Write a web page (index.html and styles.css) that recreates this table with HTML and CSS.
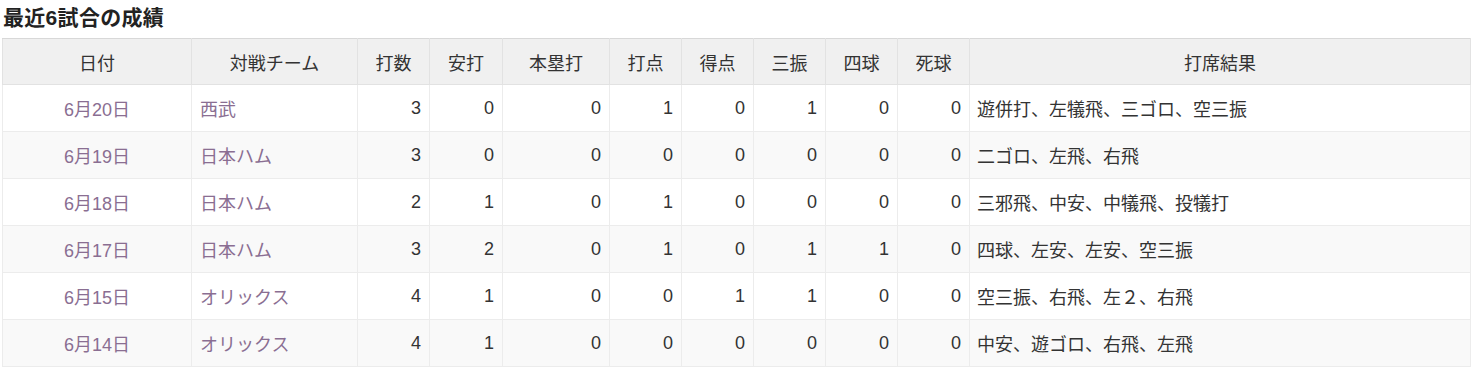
FILE: index.html
```html
<!DOCTYPE html>
<html lang="ja">
<head>
<meta charset="utf-8">
<link rel="stylesheet" href="styles.css">
</head>
<body>
<h2 class="title">最近6試合の成績</h2>
<table class="stats">
  <colgroup>
    <col class="c-date"><col class="c-team"><col class="c-n72"><col class="c-n73"><col class="c-n107">
    <col class="c-n72"><col class="c-n72"><col class="c-n72"><col class="c-n72"><col class="c-n72"><col class="c-res">
  </colgroup>
  <thead>
    <tr><th>日付</th><th>対戦チーム</th><th>打数</th><th>安打</th><th>本塁打</th><th>打点</th><th>得点</th><th>三振</th><th>四球</th><th>死球</th><th>打席結果</th></tr>
  </thead>
  <tbody>
    <tr><td class="date"><a>6月20日</a></td><td class="team"><a>西武</a></td><td>3</td><td>0</td><td>0</td><td>1</td><td>0</td><td>1</td><td>0</td><td>0</td><td class="res">遊併打、左犠飛、三ゴロ、空三振</td></tr>
    <tr><td class="date"><a>6月19日</a></td><td class="team"><a>日本ハム</a></td><td>3</td><td>0</td><td>0</td><td>0</td><td>0</td><td>0</td><td>0</td><td>0</td><td class="res">二ゴロ、左飛、右飛</td></tr>
    <tr><td class="date"><a>6月18日</a></td><td class="team"><a>日本ハム</a></td><td>2</td><td>1</td><td>0</td><td>1</td><td>0</td><td>0</td><td>0</td><td>0</td><td class="res">三邪飛、中安、中犠飛、投犠打</td></tr>
    <tr><td class="date"><a>6月17日</a></td><td class="team"><a>日本ハム</a></td><td>3</td><td>2</td><td>0</td><td>1</td><td>0</td><td>1</td><td>1</td><td>0</td><td class="res">四球、左安、左安、空三振</td></tr>
    <tr><td class="date"><a>6月15日</a></td><td class="team"><a>オリックス</a></td><td>4</td><td>1</td><td>0</td><td>0</td><td>1</td><td>1</td><td>0</td><td>0</td><td class="res">空三振、右飛、左２、右飛</td></tr>
    <tr><td class="date"><a>6月14日</a></td><td class="team"><a>オリックス</a></td><td>4</td><td>1</td><td>0</td><td>0</td><td>0</td><td>0</td><td>0</td><td>0</td><td class="res">中安、遊ゴロ、右飛、左飛</td></tr>
  </tbody>
</table>
</body>
</html>
```
FILE: styles.css
```css
html, body {
  margin: 0;
  padding: 0;
  background: #fff;
}
body {
  font-family: "Liberation Sans", "Noto Sans CJK JP", sans-serif;
  color: #333;
}
.title {
  margin: 0;
  padding: 5px 0 0 3px;
  height: 38px;
  box-sizing: border-box;
  font-size: 21px;
  line-height: 26px;
  font-weight: bold;
  color: #222;
  letter-spacing: 0.3px;
}
.stats {
  margin-left: 2px;
  border-collapse: collapse;
  table-layout: fixed;
  width: 1469px;
  font-size: 18px;
  border: 1px solid #d8d8d8;
}
.c-date { width: 189px; }
.c-team { width: 166px; }
.c-n72 { width: 72px; }
.c-n73 { width: 73px; }
.c-n107 { width: 107px; }
.c-res { width: 501px; }
.stats th {
  background: #f0f0f0;
  font-weight: normal;
  height: 45px;
  padding: 0;
  text-align: center;
  border: 1px solid #e2e2e2;
  border-top-color: #d8d8d8;
  color: #333;
}
.stats td {
  height: 46px;
  padding: 0 8px;
  text-align: right;
  border: 1px solid #ececec;
  white-space: nowrap;
}
.stats tbody tr:nth-child(even) td {
  background: #f9f9f9;
}
.stats td.date { text-align: center; }
.stats td.team { text-align: left; }
.stats td.res { text-align: left; padding-left: 7px; }
.stats a {
  color: #8a6e92;
  text-decoration: none;
}
```
